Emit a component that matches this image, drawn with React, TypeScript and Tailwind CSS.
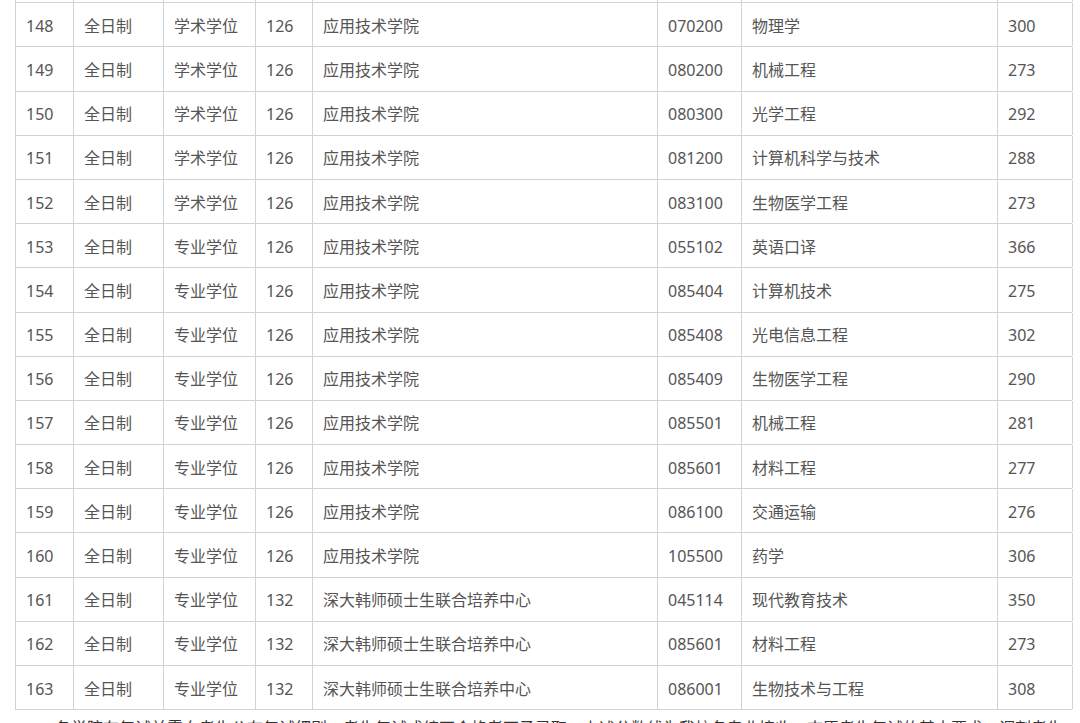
const rows: string[][] = [
  ["", "", "", "", "", "", "", ""],
  ["148", "全日制", "学术学位", "126", "应用技术学院", "070200", "物理学", "300"],
  ["149", "全日制", "学术学位", "126", "应用技术学院", "080200", "机械工程", "273"],
  ["150", "全日制", "学术学位", "126", "应用技术学院", "080300", "光学工程", "292"],
  ["151", "全日制", "学术学位", "126", "应用技术学院", "081200", "计算机科学与技术", "288"],
  ["152", "全日制", "学术学位", "126", "应用技术学院", "083100", "生物医学工程", "273"],
  ["153", "全日制", "专业学位", "126", "应用技术学院", "055102", "英语口译", "366"],
  ["154", "全日制", "专业学位", "126", "应用技术学院", "085404", "计算机技术", "275"],
  ["155", "全日制", "专业学位", "126", "应用技术学院", "085408", "光电信息工程", "302"],
  ["156", "全日制", "专业学位", "126", "应用技术学院", "085409", "生物医学工程", "290"],
  ["157", "全日制", "专业学位", "126", "应用技术学院", "085501", "机械工程", "281"],
  ["158", "全日制", "专业学位", "126", "应用技术学院", "085601", "材料工程", "277"],
  ["159", "全日制", "专业学位", "126", "应用技术学院", "086100", "交通运输", "276"],
  ["160", "全日制", "专业学位", "126", "应用技术学院", "105500", "药学", "306"],
  ["161", "全日制", "专业学位", "132", "深大韩师硕士生联合培养中心", "045114", "现代教育技术", "350"],
  ["162", "全日制", "专业学位", "132", "深大韩师硕士生联合培养中心", "085601", "材料工程", "273"],
  ["163", "全日制", "专业学位", "132", "深大韩师硕士生联合培养中心", "086001", "生物技术与工程", "308"],
];

function App() {
  return (
    <div
      className="h-[723px] w-[1080px] overflow-hidden bg-white text-[16px] text-[#555]"
      style={{ fontFamily: '"Noto Sans", "Noto Sans CJK SC", sans-serif' }}
    >
      {/* table scrolled so only the bottom edge of the previous row shows */}
      <div className="-mt-[41px] ml-[15px] w-[1057px] border-l border-[#d2d2d2]">
        {rows.map((r, ri) => (
          <div
            key={ri}
            className="grid h-[44.2px] grid-cols-[58px_90px_92px_57px_345px_84px_256px_75px] border-b border-[#d2d2d2]"
          >
            {r.map((c, i) => (
              <div
                key={i}
                className="flex items-center whitespace-nowrap border-r border-[#d2d2d2] pl-[10px] pt-[2px]"
              >
                {c}
              </div>
            ))}
          </div>
        ))}
      </div>
      <p className="mt-[5px] pl-[23px] pr-[10px] indent-[2em] leading-[26px] text-[#333]">
        各学院在复试前需向考生公布复试细则，考生复试成绩不合格者不予录取。上述分数线为我校各专业接收一志愿考生复试的基本要求，调剂考生另行通知。
      </p>
    </div>
  );
}

export default App;
